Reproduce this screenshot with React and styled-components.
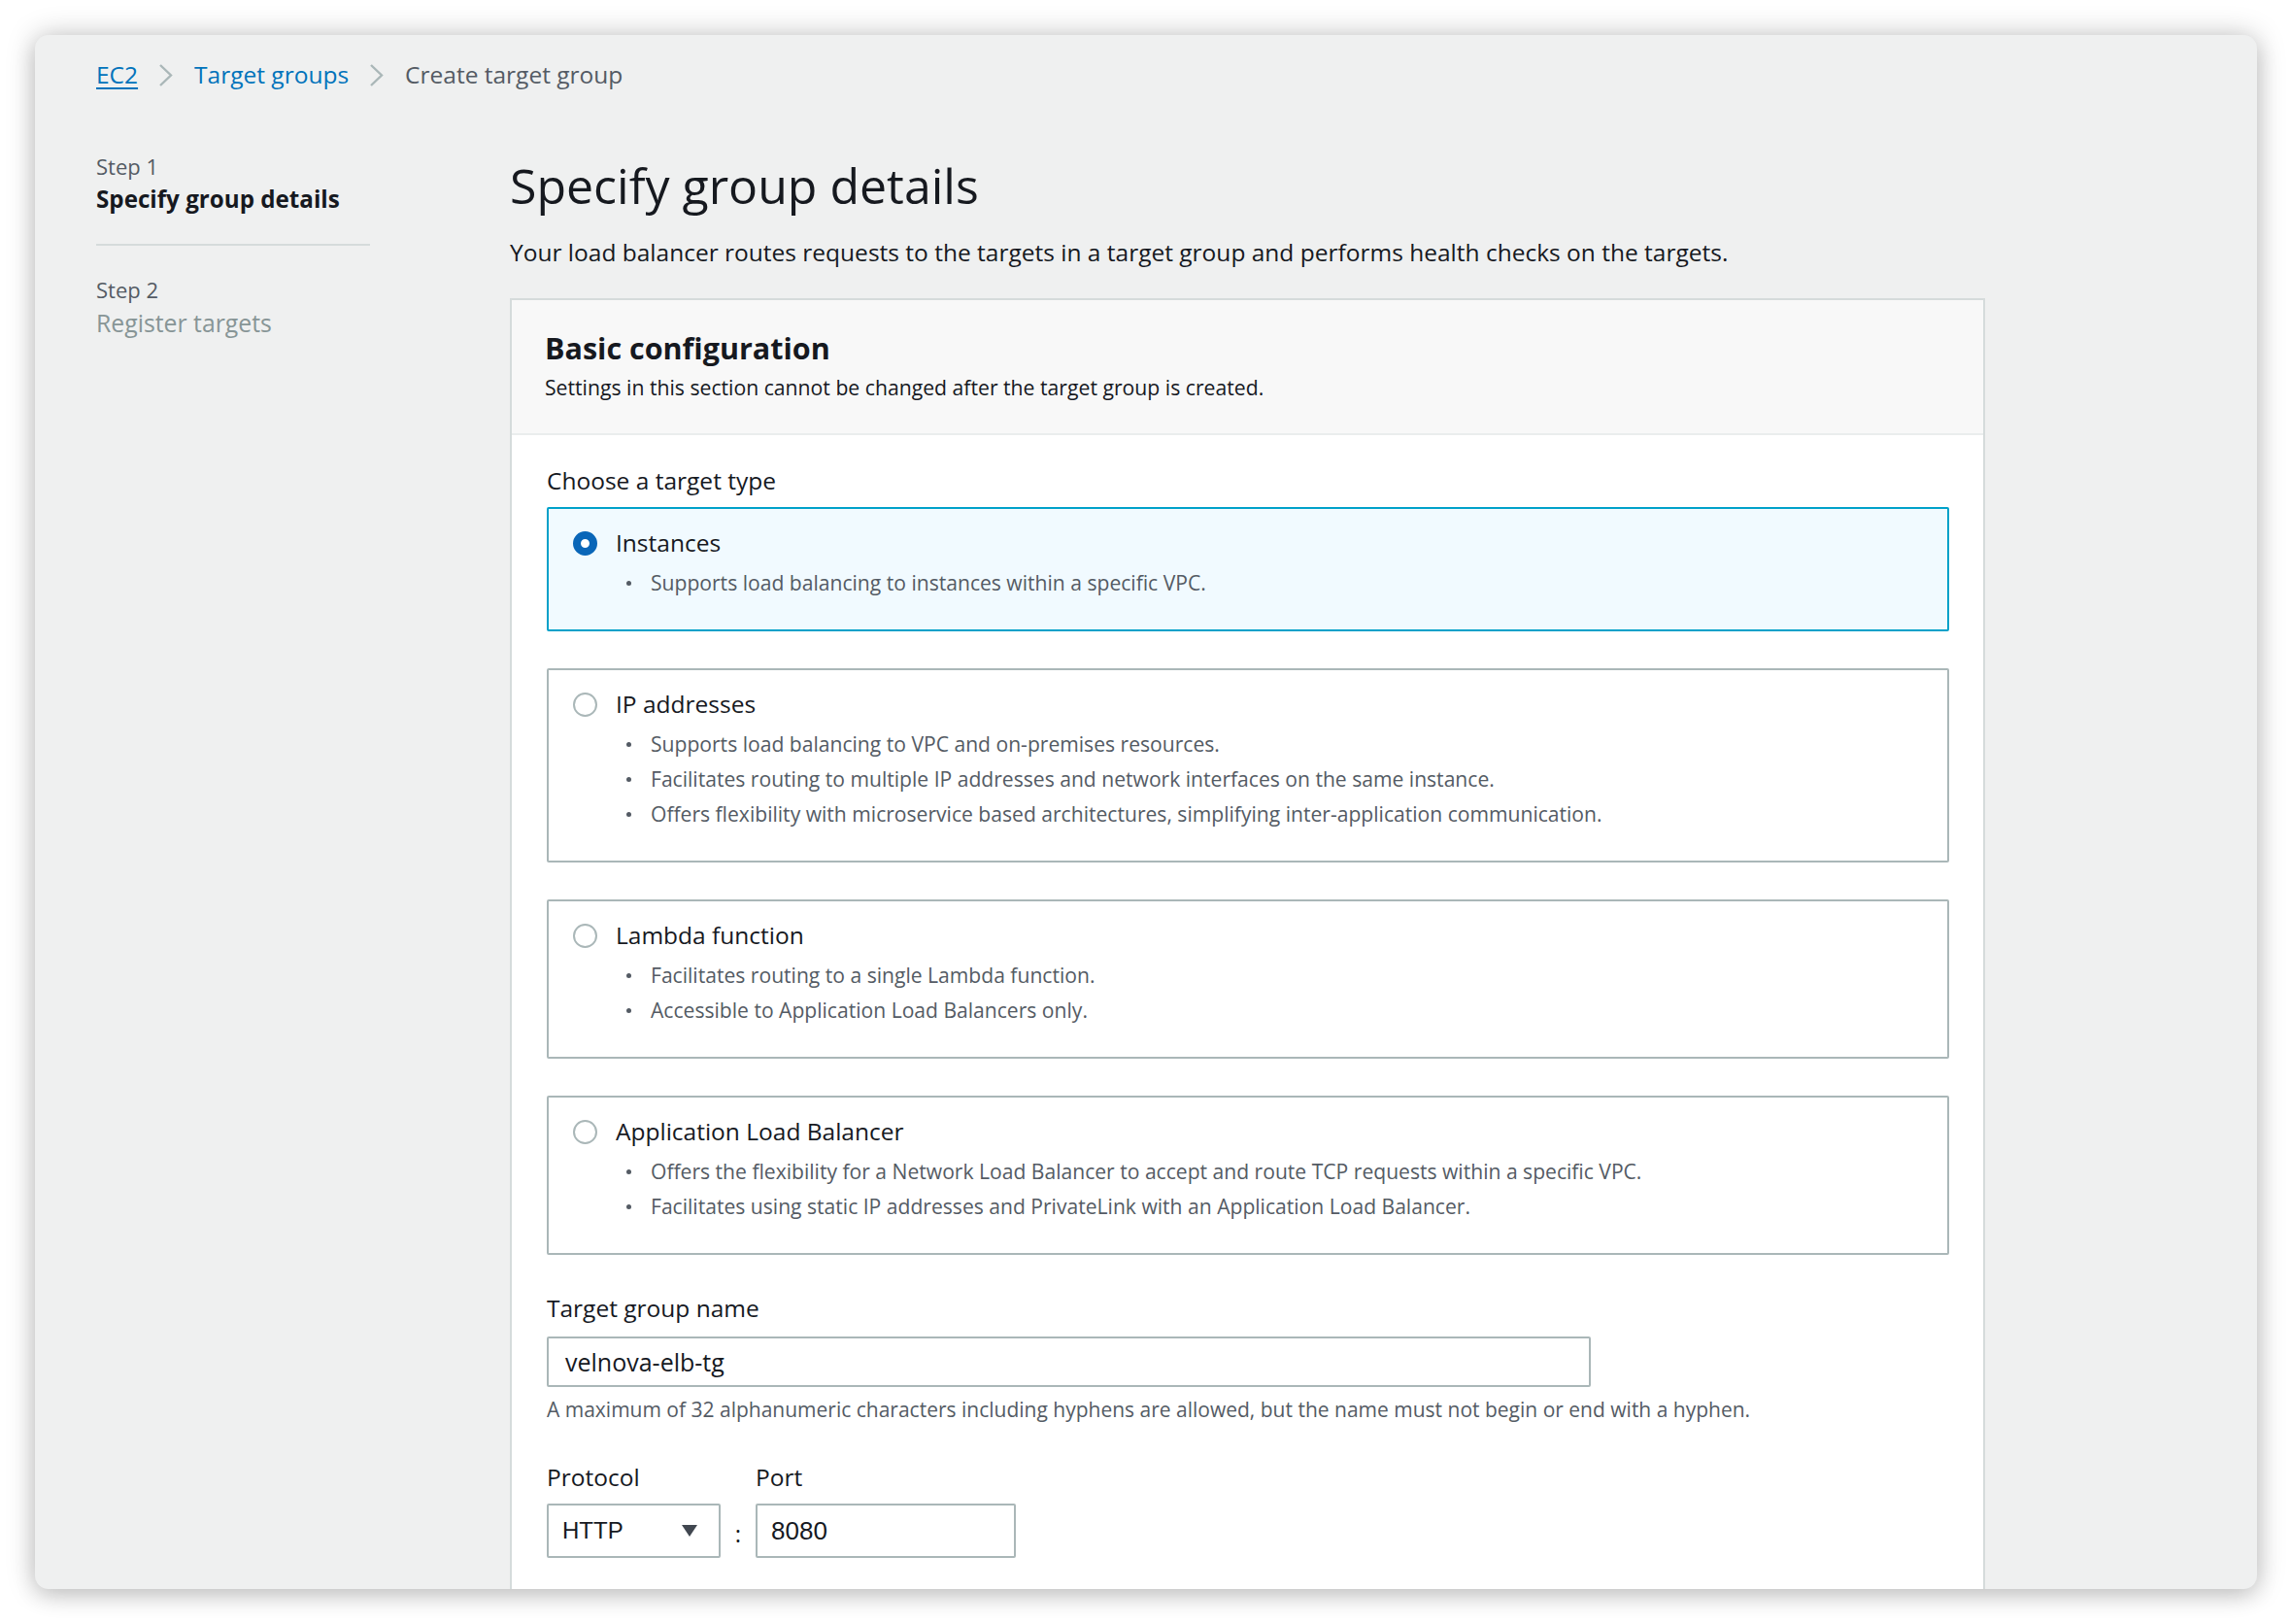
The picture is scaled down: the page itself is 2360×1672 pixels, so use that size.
import React from 'react';
import styled, { createGlobalStyle } from 'styled-components';

const Global = createGlobalStyle`
  html, body { margin: 0; padding: 0; background: #ffffff; }
  body { font-family: "Open Sans", "Noto Sans", sans-serif; color: #16191f; }
  * { box-sizing: border-box; }
`;

const Stage = styled.div`
  width: 2360px;
  height: 1672px;
  padding: 36px;
  background: #ffffff;
  overflow: hidden;
`;

const Window = styled.div`
  height: 1600px;
  background: #eff0f0;
  border-radius: 14px;
  box-shadow: 0 0 30px rgba(0, 0, 0, 0.22), 0 8px 22px rgba(0, 0, 0, 0.12);
  padding: 24px 0 0 63px;
  overflow: hidden;
  display: flex;
  flex-direction: column;
`;

const Breadcrumbs = styled.nav`
  display: flex;
  align-items: center;
  height: 34px;
  font-size: 24.5px;
  line-height: 34px;
`;

const Crumb = styled.a`
  color: ${p => (p.$current ? '#545b64' : '#0073bb')};
  text-decoration: ${p => (p.$underline ? 'underline' : 'none')};
  text-underline-offset: 4px;
  text-decoration-thickness: 2px;
`;

const Chevron = styled.svg`
  width: 15px;
  height: 25px;
  margin: 0 22px 0 21px;
  flex: none;
`;

const Layout = styled.div`
  display: flex;
  margin-top: 63px;
`;

const SideNav = styled.aside`
  width: 282px;
  margin-right: 144px;
  flex: none;
`;

const StepLabel = styled.div`
  font-size: 22px;
  line-height: 28px;
  color: #545b64;
  margin-top: ${p => p.$gap || 0}px;
`;

const StepTitle = styled.div`
  font-size: ${p => (p.$active ? 24.2 : 24.8)}px;
  line-height: 30px;
  margin-top: 5px;
  font-weight: ${p => (p.$active ? 700 : 400)};
  color: ${p => (p.$active ? '#16191f' : '#879596')};
`;

const NavDivider = styled.hr`
  border: none;
  height: 2px;
  background: #d5dbdb;
  margin: 31px 0 0 0;
`;

const Main = styled.main`
  width: 1519px;
  flex: none;
  padding-top: 4px;
`;

const PageTitle = styled.h1`
  margin: 0;
  font-size: 50px;
  line-height: 60px;
  font-weight: 400;
  color: #16191f;
`;

const PageDesc = styled.p`
  margin: 23px 0 0 0;
  font-size: 24.5px;
  line-height: 32px;
  color: #16191f;
`;

const Panel = styled.section`
  margin-top: 31px;
  background: #ffffff;
  border: 2px solid #d5dbdb;
  border-bottom: none;
`;

const PanelHeader = styled.header`
  background: #f8f8f8;
  border-bottom: 2px solid #eaeded;
  padding: 30px 34px 33px 34px;
`;

const PanelTitle = styled.h2`
  margin: 0;
  font-size: 30.5px;
  line-height: 38px;
  font-weight: 700;
`;

const PanelSub = styled.p`
  margin: 8px 0 0 0;
  font-size: 21.2px;
  line-height: 28px;
  color: #16191f;
`;

const PanelBody = styled.div`
  padding: 31px 35px 300px 36px;
`;

const FieldLabel = styled.div`
  font-size: 24.5px;
  line-height: 32px;
  color: #16191f;
  margin-top: ${p => p.$top || 0}px;
`;

const Tiles = styled.div`
  display: flex;
  flex-direction: column;
  gap: 38px;
  margin-top: 11px;
`;

const Tile = styled.label`
  display: block;
  border: 2px solid ${p => (p.$checked ? '#00a1c9' : '#aab7b8')};
  background: ${p => (p.$checked ? '#f1faff' : '#ffffff')};
  border-radius: 2px;
  padding: 19px 24px 30px 25px;
`;

const TileHead = styled.div`
  display: flex;
  align-items: center;
  gap: 19px;
  font-size: 24.5px;
  line-height: 32px;
`;

const Radio = styled.span`
  width: 25px;
  height: 25px;
  border-radius: 50%;
  flex: none;
  background: #ffffff;
  border: ${p => (p.$checked ? '8.5px solid #0a66b8' : '2px solid #aab7b8')};
`;

const Bullets = styled.ul`
  list-style: none;
  margin: 7px 0 0 0;
  padding: 0 0 0 55px;
`;

const Bullet = styled.li`
  display: flex;
  align-items: center;
  font-size: 21.1px;
  line-height: 36px;
  color: #545b64;
  &::before {
    content: '';
    width: 5px;
    height: 5px;
    border-radius: 50%;
    background: #545b64;
    margin-right: 20px;
    flex: none;
  }
`;

const TextInput = styled.div`
  margin-top: ${p => p.$top || 0}px;
  width: ${p => p.$width}px;
  height: ${p => p.$height}px;
  border: 2px solid #aab7b8;
  border-radius: 2px;
  background: #ffffff;
  display: flex;
  align-items: center;
  justify-content: space-between;
  padding: 0 ${p => p.$padRight || 14}px 0 ${p => p.$padLeft || 14}px;
  font-family: ${p => (p.$system ? '"Liberation Sans", Arial, sans-serif' : '"Open Sans", "Noto Sans", sans-serif')};
  font-size: ${p => p.$size || 25}px;
  color: #16191f;
`;

const Hint = styled.div`
  margin-top: 9px;
  font-size: 21px;
  line-height: 28px;
  color: #545b64;
`;

const ProtoGrid = styled.div`
  margin-top: 40px;
  display: grid;
  grid-template-columns: 179px 36px 268px;
  grid-template-rows: 32px 56px;
  row-gap: 11px;
`;

const Colon = styled.div`
  grid-row: 2;
  grid-column: 2;
  display: flex;
  align-items: center;
  justify-content: center;
  font-size: 24px;
  color: #16191f;
  padding-top: 4px;
`;

const GridLabel = styled.div`
  grid-row: 1;
  grid-column: ${p => p.$col};
  font-size: 24.5px;
  line-height: 32px;
`;

const GridCell = styled.div`
  grid-row: 2;
  grid-column: ${p => p.$col};
`;

const options = [
  {
    title: 'Instances',
    checked: true,
    points: ['Supports load balancing to instances within a specific VPC.'],
  },
  {
    title: 'IP addresses',
    points: [
      'Supports load balancing to VPC and on-premises resources.',
      'Facilitates routing to multiple IP addresses and network interfaces on the same instance.',
      'Offers flexibility with microservice based architectures, simplifying inter-application communication.',
    ],
  },
  {
    title: 'Lambda function',
    points: [
      'Facilitates routing to a single Lambda function.',
      'Accessible to Application Load Balancers only.',
    ],
  },
  {
    title: 'Application Load Balancer',
    points: [
      'Offers the flexibility for a Network Load Balancer to accept and route TCP requests within a specific VPC.',
      'Facilitates using static IP addresses and PrivateLink with an Application Load Balancer.',
    ],
  },
];

const ChevronIcon = () => (
  <Chevron viewBox="0 0 15 25">
    <polyline points="2,2 13,12.5 2,23" fill="none" stroke="#aab7b8" strokeWidth="2.4" />
  </Chevron>
);

export default function App() {
  return (
    <>
      <Global />
      <Stage>
        <Window>
          <Breadcrumbs>
            <Crumb $underline>EC2</Crumb>
            <ChevronIcon />
            <Crumb>Target groups</Crumb>
            <ChevronIcon />
            <Crumb $current>Create target group</Crumb>
          </Breadcrumbs>
          <Layout>
            <SideNav>
              <StepLabel>Step 1</StepLabel>
              <StepTitle $active>Specify group details</StepTitle>
              <NavDivider />
              <StepLabel $gap={31}>Step 2</StepLabel>
              <StepTitle>Register targets</StepTitle>
            </SideNav>
            <Main>
              <PageTitle>Specify group details</PageTitle>
              <PageDesc>
                Your load balancer routes requests to the targets in a target group and performs health checks on the targets.
              </PageDesc>
              <Panel>
                <PanelHeader>
                  <PanelTitle>Basic configuration</PanelTitle>
                  <PanelSub>Settings in this section cannot be changed after the target group is created.</PanelSub>
                </PanelHeader>
                <PanelBody>
                  <FieldLabel>Choose a target type</FieldLabel>
                  <Tiles>
                    {options.map(o => (
                      <Tile key={o.title} $checked={o.checked}>
                        <TileHead>
                          <Radio $checked={o.checked} />
                          <span>{o.title}</span>
                        </TileHead>
                        <Bullets>
                          {o.points.map(pt => (
                            <Bullet key={pt}>{pt}</Bullet>
                          ))}
                        </Bullets>
                      </Tile>
                    ))}
                  </Tiles>
                  <FieldLabel $top={39}>Target group name</FieldLabel>
                  <TextInput $top={13} $width={1075} $height={52} $padLeft={17}>velnova-elb-tg</TextInput>
                  <Hint>A maximum of 32 alphanumeric characters including hyphens are allowed, but the name must not begin or end with a hyphen.</Hint>
                  <ProtoGrid>
                    <GridLabel $col={1}>Protocol</GridLabel>
                    <GridLabel $col={3}>Port</GridLabel>
                    <GridCell $col={1}>
                      <TextInput $width={179} $height={56} $system $size={24} $padRight={21}>
                        <span>HTTP</span>
                        <svg width="18" height="14" viewBox="0 0 18 14">
                          <polygon points="1,1 17,1 9,13" fill="#414750" />
                        </svg>
                      </TextInput>
                    </GridCell>
                    <Colon>:</Colon>
                    <GridCell $col={3}>
                      <TextInput $width={268} $height={56} $system $size={26}>8080</TextInput>
                    </GridCell>
                  </ProtoGrid>
                </PanelBody>
              </Panel>
            </Main>
          </Layout>
        </Window>
      </Stage>
    </>
  );
}
